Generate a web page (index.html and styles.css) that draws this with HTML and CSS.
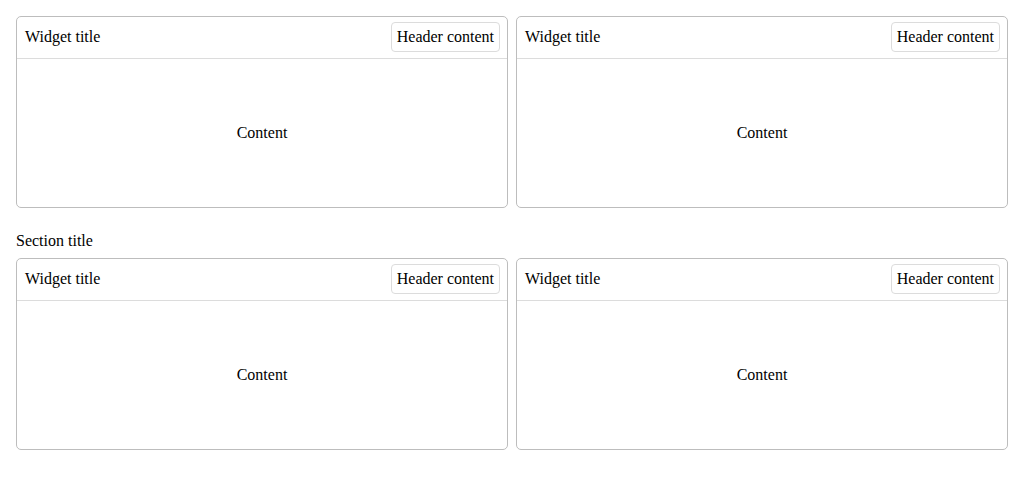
FILE: index.html
```html
<!DOCTYPE html>
<html>
<head>
<meta charset="utf-8">
<link rel="stylesheet" href="styles.css">
</head>
<body>
<div class="page">
  <div class="row">
    <div class="widget">
      <div class="widget-header">
        <span class="widget-title">Widget title</span>
        <span class="header-content">Header content</span>
      </div>
      <div class="widget-body">Content</div>
    </div>
    <div class="widget">
      <div class="widget-header">
        <span class="widget-title">Widget title</span>
        <span class="header-content">Header content</span>
      </div>
      <div class="widget-body">Content</div>
    </div>
  </div>
  <div class="section-title">Section title</div>
  <div class="row">
    <div class="widget">
      <div class="widget-header">
        <span class="widget-title">Widget title</span>
        <span class="header-content">Header content</span>
      </div>
      <div class="widget-body">Content</div>
    </div>
    <div class="widget">
      <div class="widget-header">
        <span class="widget-title">Widget title</span>
        <span class="header-content">Header content</span>
      </div>
      <div class="widget-body">Content</div>
    </div>
  </div>
</div>
</body>
</html>
```
FILE: styles.css
```css
html, body {
  margin: 0;
  padding: 0;
  background: #fff;
}
body {
  font-family: "Liberation Serif", "Times New Roman", serif;
  font-size: 16px;
  line-height: 18px;
  color: #000;
}
.page {
  padding: 16px;
}
.row {
  display: grid;
  grid-template-columns: 1fr 1fr;
  gap: 8px;
}
.widget {
  border: 1px solid #bdbdbd;
  border-radius: 5px;
  display: flex;
  flex-direction: column;
  height: 192px;
  box-sizing: border-box;
}
.widget-header {
  display: flex;
  align-items: center;
  justify-content: space-between;
  height: 42px;
  box-sizing: border-box;
  padding: 0 7px 2px 8px;
  border-bottom: 1px solid #dcdcdc;
}
.header-content {
  border: 1px solid #dcdcdc;
  border-radius: 4px;
  padding: 5px 5px;
}
.widget-body {
  flex: 1;
  display: flex;
  align-items: center;
  justify-content: center;
}
.section-title {
  margin: 24px 0 8px;
  height: 18px;
}
```
